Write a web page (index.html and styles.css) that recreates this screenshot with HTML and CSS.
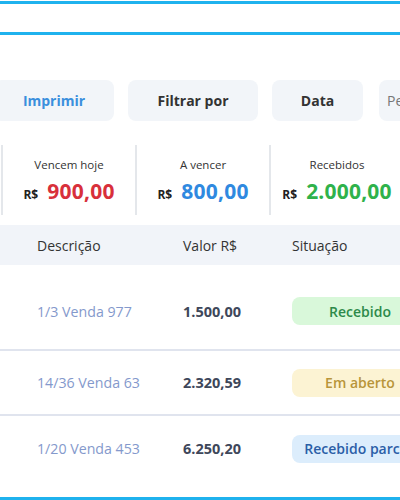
FILE: index.html
```html
<!DOCTYPE html>
<html lang="pt-BR">
<head>
  <meta charset="UTF-8">
  <title>Contas a receber</title>
  <meta name="viewport" content="width=device-width, initial-scale=1.0">
  <link rel="stylesheet" href="styles.css">
</head>
<body>
  <div class="page">
    <div class="top-bar"></div>

    <div class="toolbar">
      <button class="tool-btn primary">Imprimir</button>
      <button class="tool-btn btn-filter">Filtrar por</button>
      <button class="tool-btn btn-date">Data</button>
      <button class="tool-btn btn-period light">Período</button>
    </div>

    <div class="summary">
      <div class="card">
        <span class="card-label">Vencem hoje</span>
        <span class="card-value"><small>R$</small> <b class="red">900,00</b></span>
      </div>
      <div class="card">
        <span class="card-label">A vencer</span>
        <span class="card-value"><small>R$</small> <b class="blue">800,00</b></span>
      </div>
      <div class="card">
        <span class="card-label">Recebidos</span>
        <span class="card-value"><small>R$</small> <b class="green">2.000,00</b></span>
      </div>
    </div>

    <div class="table">
      <div class="thead">
        <span>Descrição</span>
        <span>Valor R$</span>
        <span>Situação</span>
      </div>
      <div class="tbody">
        <div class="row">
          <span class="desc">1/3 Venda 977</span>
          <span class="value">1.500,00</span>
          <span class="badge ok">Recebido</span>
        </div>
        <div class="row">
          <span class="desc">14/36 Venda 63</span>
          <span class="value">2.320,59</span>
          <span class="badge open">Em aberto</span>
        </div>
        <div class="row">
          <span class="desc">1/20 Venda 453</span>
          <span class="value">6.250,20</span>
          <span class="badge partial">Recebido parcial</span>
        </div>
      </div>
    </div>

    <div class="bottom-bar"></div>
  </div>
</body>
</html>
```

FILE: styles.css
```css
:root {
  --line-color: #1fb2ee;
  --btn-bg: #f2f5f9;
  --text-color: #333;
  --radius: 8px;
}

* {
  box-sizing: border-box;
}

html, body {
  margin: 0;
  background: #fff;
  overflow: hidden;
}

body {
  font-family: "Open Sans", "Noto Sans", sans-serif;
  color: var(--text-color);
}

.page {
  width: 600px;
  height: 500px;
}

.top-bar {
  margin-top: 1px;
  height: 34px;
  border-top: 3px solid var(--line-color);
  border-bottom: 3px solid var(--line-color);
}

.toolbar {
  display: flex;
  gap: 14px;
  margin: 45px 0 0 -6px;
}

.tool-btn {
  height: 41px;
  border: none;
  border-radius: var(--radius);
  background: var(--btn-bg);
  font-family: inherit;
  font-size: 14px;
  font-weight: 700;
  color: #333;
  padding: 0;
}

.tool-btn.primary {
  width: 120px;
  color: #3a8fdd;
}

.btn-filter {
  width: 130px;
}

.btn-date {
  width: 91px;
}

.btn-period {
  width: 120px;
  margin-left: 2px;
  text-align: left;
  padding-left: 8px;
}

.tool-btn.light {
  font-weight: 400;
  color: #777;
}

.summary {
  display: flex;
  margin: 24px 0 0 1px;
  height: 70px;
}

.card {
  width: 134px;
  border-left: 2px solid #e4e7eb;
  display: flex;
  flex-direction: column;
  align-items: center;
  justify-content: center;
  gap: 5px;
  padding-top: 2px;
}

.card-label {
  font-size: 11.5px;
  color: #333;
}

.card-value {
  white-space: nowrap;
}

.card-value small {
  font-size: 12px;
  font-weight: 700;
  color: #222;
}

.card-value b {
  font-size: 21px;
  font-weight: 700;
  margin-left: 5px;
  letter-spacing: 0.2px;
}

.red { color: #d8303b; }
.blue { color: #2f89e0; }
.green { color: #2fb24b; }

.table {
  margin-top: 10px;
}

.thead,
.row {
  display: grid;
  grid-template-columns: 146px 109px 1fr;
  padding-left: 37px;
  align-items: center;
}

.thead {
  height: 40px;
  background: #f1f4f9;
  font-size: 14px;
  color: #333;
}

.tbody {
  margin-top: 8px;
}

.row {
  height: 65px;
  border-bottom: 2px solid #e0e4ee;
}

.row:first-child {
  height: 78px;
}

.row:last-child {
  border-bottom: none;
}

.desc {
  font-size: 14.2px;
  color: #8499cc;
}

.value {
  font-size: 14.5px;
  font-weight: 700;
  color: #3e475a;
}

.badge {
  width: 136px;
  height: 28px;
  border-radius: var(--radius);
  display: flex;
  align-items: center;
  justify-content: center;
  font-size: 14px;
  font-weight: 600;
  white-space: nowrap;
}

.badge.ok {
  background: #d9f8da;
  color: #2d8a4a;
}

.badge.open {
  background: #fcf3d3;
  color: #b8953a;
}

.badge.partial {
  background: #dcedfc;
  color: #2b5ea7;
}

.bottom-bar {
  margin-top: 16px;
  border-top: 3px solid var(--line-color);
}
```
